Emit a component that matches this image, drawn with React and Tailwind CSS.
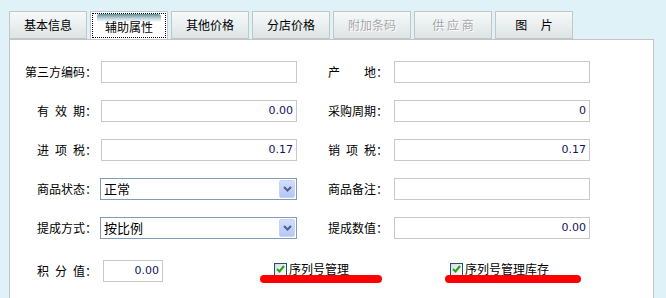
const font = { fontFamily: '"Noto Sans CJK SC", "DejaVu Sans", sans-serif' };

const tabs = [
  { label: '基本信息' },
  { label: '辅助属性', active: true },
  { label: '其他价格' },
  { label: '分店价格' },
  { label: '附加条码', disabled: true },
  { label: '供 应 商', disabled: true },
  { label: '图\u00a0\u00a0\u00a0\u00a0\u00a0片' },
];

const Tab = ({ label, active, disabled }) => {
  if (active) {
    return (
      <div className="relative w-[78px] h-[28px] border border-[#c2c6c6] border-b-0 bg-white flex items-center justify-center">
        <div className="absolute left-[6px] right-[6px] top-[2px] h-[8px] rounded-t-[3px] bg-gradient-to-b from-[#5d8c97] via-[#b9d0d5] to-white" />
        <div className="absolute inset-[1px] border border-dotted border-black" />
        <span className="relative text-[12px] text-black mt-[3px]">{label}</span>
      </div>
    );
  }
  return (
    <div className="w-[78px] h-[28px] border border-[#c2c6c6] bg-gradient-to-b from-[#f7f9f9] to-[#dde4e4] flex items-center justify-center">
      <span
        className={`text-[12px] whitespace-pre ${
          disabled ? 'text-[#a9a9a9] [text-shadow:1px_1px_0_#fff]' : 'text-black'
        }`}
      >
        {label}
      </span>
    </div>
  );
};

const TextBox = ({ value = '', className = 'w-[196px]' }) => (
  <div className={`h-[22px] border border-[#c9c9c9] bg-white flex items-center justify-end pr-[3px] ${className}`}>
    <span className="text-[#14145e]" style={{ fontFamily: '"DejaVu Sans", sans-serif', fontSize: 11 }}>
      {value}
    </span>
  </div>
);

const SelectBox = ({ value }) => (
  <div className="ml-[-1px] w-[197px] h-[22px] border border-[#7f9db9] bg-white flex items-center">
    <span className="flex-1 pl-[3px] text-[13px] text-black">{value}</span>
    <div className="w-[16px] h-[18px] mr-[1px] rounded-[2px] bg-gradient-to-b from-[#d3defd] to-[#b3c6f6] border border-[#c6d4f8] flex items-center justify-center">
      <svg width="9" height="6" viewBox="0 0 9 6">
        <path d="M1 1 L4.5 4.5 L8 1" stroke="#4d6185" strokeWidth="2" fill="none" />
      </svg>
    </div>
  </div>
);

const Label = ({ children, w = 'w-[87px]' }) => (
  <div className={`${w} text-right text-[12px] text-black whitespace-pre shrink-0`}>{children}</div>
);

const Row = ({ left, leftField, right, rightField }) => (
  <div className="flex items-center h-[22px]">
    <Label>{left}</Label>
    <div className="ml-[4px]">{leftField}</div>
    {right && (
      <>
        <Label w="w-[91px]">{right}</Label>
        <div className="ml-[6px]">{rightField}</div>
      </>
    )}
  </div>
);

const CheckItem = ({ label, line }) => (
  <div className="relative flex items-center">
    <div className="w-[13px] h-[13px] border border-[#1c5180] bg-gradient-to-br from-[#dcdcd6] to-white flex items-center justify-center">
      <svg width="9" height="8" viewBox="0 0 9 8">
        <path d="M1 4 L3.5 6.5 L8 1" stroke="#21a121" strokeWidth="2" fill="none" />
      </svg>
    </div>
    <span className="ml-[2px] text-[12px] text-black">{label}</span>
    <div className={`absolute top-[15px] h-[8px] rounded-full bg-[#ff0000] ${line}`} />
  </div>
);

export default function App() {
  return (
    <div className="w-[666px] h-[298px] bg-[#dff2f7] overflow-hidden pl-[9px] pt-[11px]" style={font}>
      <div className="flex gap-[3px]">
        {tabs.map((t) => (
          <Tab key={t.label} {...t} />
        ))}
      </div>
      <div className="w-[645px] h-[270px] border border-[#c4c4c4] bg-white pt-[21px] flex flex-col gap-[17px]">
        <Row left="第三方编码：" leftField={<TextBox />} right={'产\u2003\u2003地：'} rightField={<TextBox />} />
        <Row left={'有\u2002效\u2002期：'} leftField={<TextBox value="0.00" />} right="采购周期：" rightField={<TextBox value="0" />} />
        <Row left={'进\u2002项\u2002税：'} leftField={<TextBox value="0.17" />} right={'销\u2002项\u2002税：'} rightField={<TextBox value="0.17" />} />
        <Row left="商品状态：" leftField={<SelectBox value="正常" />} right="商品备注：" rightField={<TextBox />} />
        <Row left="提成方式：" leftField={<SelectBox value="按比例" />} right="提成数值：" rightField={<TextBox value="0.00" />} />
        <div className="flex items-center h-[22px] mt-[4px]">
          <Label>{'积\u2002分\u2002值：'}</Label>
          <div className="ml-[6px]">
            <TextBox value="0.00" className="w-[60px]" />
          </div>
          <div className="ml-[111px] mt-[-4px]">
            <CheckItem label="序列号管理" line="left-[-14px] w-[122px]" />
          </div>
          <div className="ml-[101px] mt-[-4px]">
            <CheckItem label="序列号管理库存" line="left-[-5px] w-[136px]" />
          </div>
        </div>
      </div>
    </div>
  );
}
